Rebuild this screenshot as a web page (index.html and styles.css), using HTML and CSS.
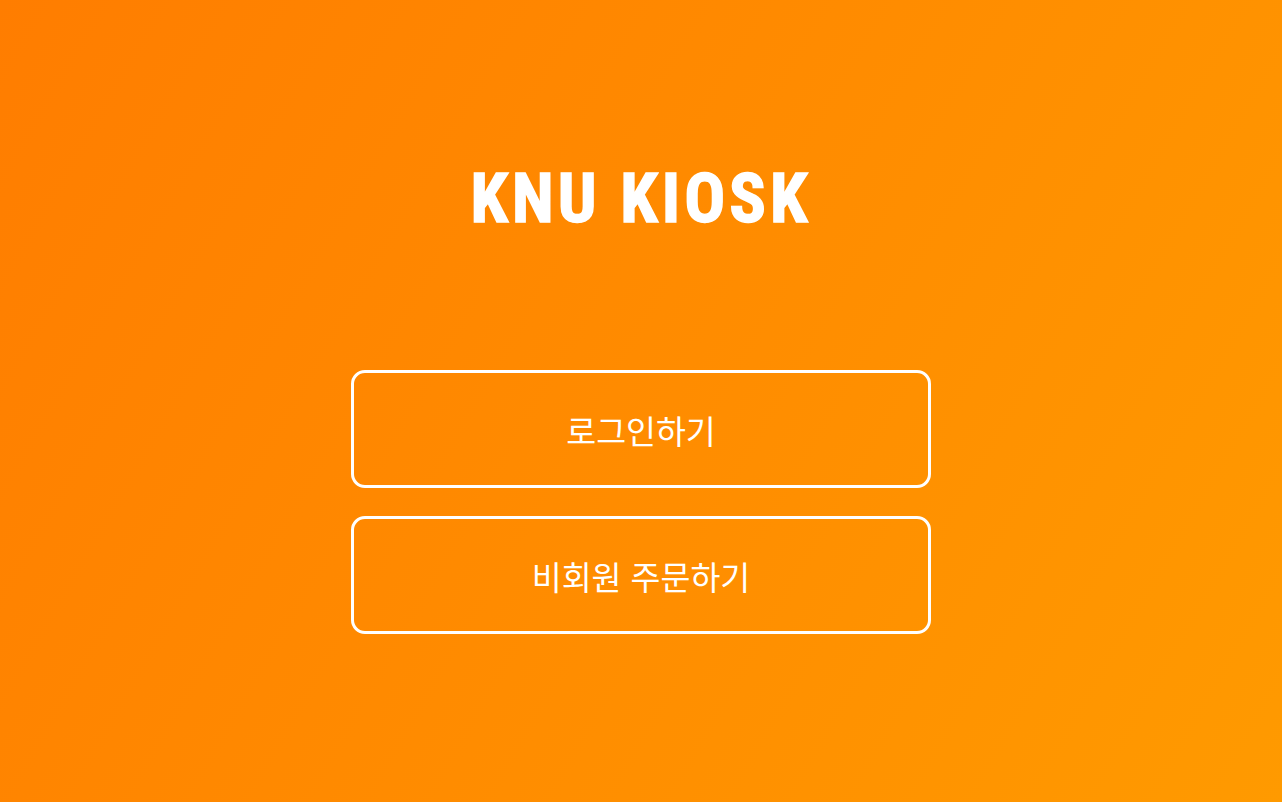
FILE: index.html
```html
<!DOCTYPE html>
<html lang="ko">
<head>
<meta charset="utf-8">
<title>KNU KIOSK</title>
<link rel="stylesheet" href="styles.css">
</head>
<body>
<main class="screen">
  <h1 class="title">KNU KIOSK</h1>
  <div class="actions">
    <button class="action">로그인하기</button>
    <button class="action">비회원 주문하기</button>
  </div>
</main>
</body>
</html>
```

FILE: styles.css
```css
html, body {
  margin: 0;
  padding: 0;
  height: 100%;
}
body {
  background: linear-gradient(120deg, #ff7d00 0%, #ff9a00 100%);
  font-family: "Noto Sans CJK KR", "Noto Sans", sans-serif;
  color: #fff;
}
.screen {
  display: flex;
  flex-direction: column;
  align-items: center;
  padding-top: 165px;
  box-sizing: border-box;
  min-height: 100%;
}
.title {
  margin: 0 0 137px;
  font-family: "Liberation Sans Narrow", "Roboto Condensed", "Liberation Sans", sans-serif;
  font-weight: 700;
  font-size: 68px;
  line-height: 1;
  letter-spacing: 4px;
  -webkit-text-stroke: 1.4px #fff;
  color: #fff;
}
.actions {
  display: flex;
  flex-direction: column;
  gap: 28px;
}
.action {
  box-sizing: border-box;
  width: 580px;
  height: 118px;
  border: 3px solid #fff;
  border-radius: 14px;
  background: transparent;
  color: #fff;
  font-family: "Noto Sans CJK KR", "Noto Sans", sans-serif;
  font-size: 32.5px;
  font-weight: 400;
  cursor: pointer;
}
```
